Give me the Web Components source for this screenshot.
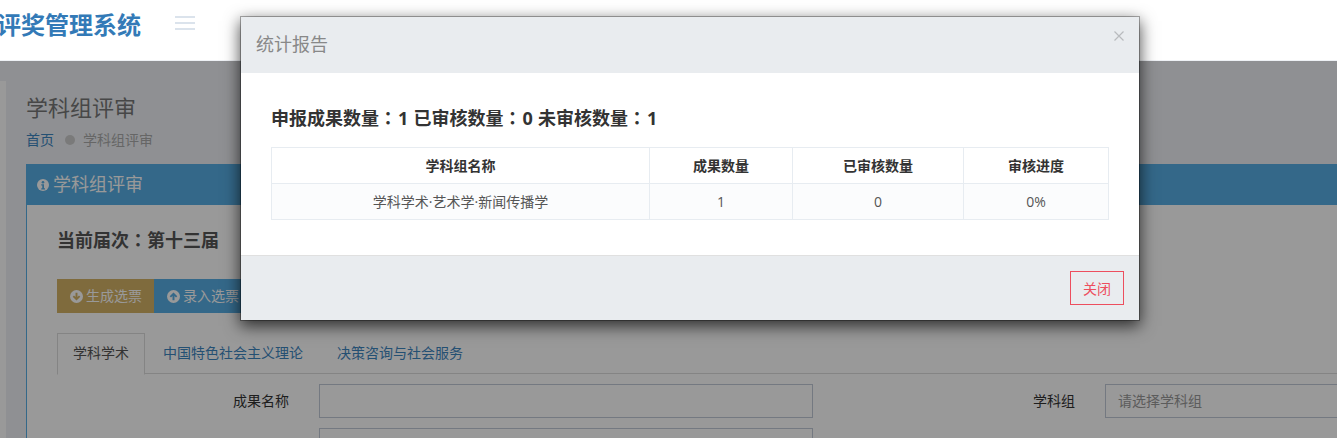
<!DOCTYPE html>
<html lang="zh-CN">
<head>
<meta charset="utf-8">
<title>学科组评审</title>
<style>
  html, body { margin: 0; height: 100%; overflow: hidden; }
  body {
    position: relative;
    font-family: "Open Sans", "Noto Sans CJK SC", sans-serif;
    font-size: 14px;
    color: #333;
    background: #eef1f5;
  }
</style>
</head>
<body>
<app-header>评奖管理系统</app-header>

<page-shell>
  <span slot="title">学科组评审</span>
  <span slot="crumb">学科组评审</span>
  <review-panel></review-panel>
</page-shell>

<report-modal></report-modal>

<script>
// Iconos de Font Awesome dibujados a mano, el color interior es el del fondo
function circleIcon(inner, bg) {
  return `<svg width="13" height="13" viewBox="0 0 24 24" aria-hidden="true">
    <circle cx="12" cy="12" r="12" fill="#fff"/>${inner.replace(/BG/g, bg)}</svg>`;
}
const ICON_INFO = '<circle cx="12" cy="6.5" r="2.6" fill="BG"/><path d="M8.5 10.5h5.5v8h2v2.5H8.5v-2.5h2v-5.5h-2z" fill="BG"/>';
const ICON_DOWN = '<path d="M12 19.5l-7-7 2.4-2.4 2.8 2.8V5h3.6v7.9l2.8-2.8 2.4 2.4z" fill="BG"/>';
const ICON_UP = '<path d="M12 4.5l7 7-2.4 2.4-2.8-2.8V19h-3.6v-7.9l-2.8 2.8L5 11.500z" fill="BG"/>';

// Barra superior, queda por encima del fondo oscuro del modal
class AppHeader extends HTMLElement {
  constructor() {
    super();
    this.attachShadow({ mode: 'open' });
  }
  connectedCallback() {
    this.shadowRoot.innerHTML = `
      <style>
        :host {
          display: flex;
          position: relative;
          z-index: 2;
          height: 60px;
          background: #fff;
          border-bottom: 1px solid #eef1f5;
        }
        .brand {
          width: 141px;
          display: flex;
          justify-content: flex-end;
          overflow: hidden;
          padding-top: 11px;
          font-size: 24px;
          font-weight: 700;
          line-height: 26px;
          white-space: nowrap;
          color: #337ab7;
          font-family: "Noto Sans CJK SC", sans-serif;
        }
        .toggler {
          display: flex;
          flex-direction: column;
          gap: 4px;
          width: 20px;
          margin: 16px 0 0 34px;
        }
        .toggler i { display: block; height: 2px; background: #dbe3ec; }
      </style>
      <div class="brand"><span><slot></slot></span></div>
      <div class="toggler"><i></i><i></i><i></i></div>
    `;
  }
}
customElements.define('app-header', AppHeader);

// Contenido de la página con la franja del menú lateral y el fondo oscuro
class PageShell extends HTMLElement {
  constructor() {
    super();
    this.attachShadow({ mode: 'open' });
  }
  connectedCallback() {
    this.shadowRoot.innerHTML = `
      <style>
        :host {
          display: flex;
          position: relative;
          height: 377px;
          overflow: hidden;
        }
        .side { flex: 0 0 6px; margin-top: 20px; background: #fff; }
        .content { flex: 0 0 1500px; padding: 30px 0 0 20px; }
        h1 {
          margin: 0;
          height: 30px;
          font-size: 22px;
          font-weight: 400;
          line-height: 30px;
          color: #777;
          font-family: "Noto Sans CJK SC", sans-serif;
        }
        .crumbs {
          display: flex;
          align-items: center;
          height: 20px;
          margin: 9px 0 14px;
          line-height: 20px;
          font-size: 14px;
          color: #aaa;
        }
        .crumbs a { color: #3d85c0; text-decoration: none; }
        .crumbs i {
          width: 10px;
          height: 10px;
          margin: 0 8px 0 11px;
          border-radius: 50%;
          background: #ccc;
        }
        .backdrop {
          position: absolute;
          inset: 0;
          background: rgba(0, 0, 0, .4);
        }
      </style>
      <div class="side"></div>
      <div class="content">
        <h1><slot name="title"></slot></h1>
        <div class="crumbs"><a href="#">首页</a><i></i><slot name="crumb"></slot></div>
        <slot></slot>
      </div>
      <div class="backdrop"></div>
    `;
  }
}
customElements.define('page-shell', PageShell);

class ReviewPanel extends HTMLElement {
  constructor() {
    super();
    this.attachShadow({ mode: 'open' });
  }
  connectedCallback() {
    this.shadowRoot.innerHTML = `
      <style>
        :host {
          display: block;
          background: #fff;
          border-left: 1px solid #57aee4;
          height: 400px;
        }
        .head {
          display: flex;
          align-items: center;
          gap: 4px;
          height: 41px;
          padding-left: 10px;
          margin-left: -1px;
          background: #57aee4;
          color: #fff;
          font-size: 18px;
        }
        .head svg { width: 12px; height: 12px; margin-left: 1px; }
        .head span { margin-top: -3px; }
        .body { padding: 22px 0 0 30px; }
        h2 {
          height: 24px;
          margin: 0 0 28px;
          font-size: 18px;
          line-height: 24px;
          font-weight: 700;
          color: #555;
          font-family: "Noto Sans CJK SC", sans-serif;
        }
        h2 span { font-family: "Noto Sans CJK TC", sans-serif; text-spacing-trim: space-all; }
        .actions { display: flex; }
        .btn {
          display: flex;
          align-items: center;
          gap: 3px;
          height: 34px;
          padding: 0 12px 0 13px;
          color: #fff;
        }
        .btn span { margin-top: -2px; }
        .gold { background: #d4b267; }
        .blue { background: #57aee4; }
        .tabs {
          display: flex;
          gap: 2px;
          margin: 20px 0 10px;
          height: 40px;
          border-bottom: 1px solid #ddd;
        }
        .tab {
          height: 40px;
          padding: 0 16px;
          line-height: 40px;
          color: #3d85c0;
        }
        .tab.on {
          position: relative;
          height: 40px;
          padding: 0 15px;
          background: #fff;
          color: #555;
          border: 1px solid #ddd;
          border-bottom: 1px solid #fff;
          line-height: 38px;
        }
        .form {
          display: grid;
          grid-template-columns: 262px 494px 292px 400px;
          row-gap: 10px;
          align-items: center;
        }
        label { height: 34px; padding-right: 30px; text-align: right; line-height: 34px; color: #333; }
        .input {
          height: 32px;
          padding: 0 12px;
          line-height: 32px;
          border: 1px solid #c2cad8;
          color: #999;
        }
      </style>
      <div class="head">${circleIcon(ICON_INFO, '#57aee4')}<span>学科组评审</span></div>
      <div class="body">
        <h2>当前届次<span lang="zh-TW">：</span>第十三届</h2>
        <div class="actions">
          <div class="btn gold">${circleIcon(ICON_DOWN, '#d4b267')}<span>生成选票</span></div>
          <div class="btn blue">${circleIcon(ICON_UP, '#57aee4')}<span>录入选票</span></div>
        </div>
        <div class="tabs">
          <div class="tab on">学科学术</div>
          <div class="tab">中国特色社会主义理论</div>
          <div class="tab">决策咨询与社会服务</div>
        </div>
        <div class="form">
          <label>成果名称</label>
          <div class="input"></div>
          <label>学科组</label>
          <div class="input">请选择学科组</div>
          <label></label>
          <div class="input"></div>
        </div>
      </div>
    `;
  }
}
customElements.define('review-panel', ReviewPanel);

class StatsTable extends HTMLElement {
  constructor() {
    super();
    this.attachShadow({ mode: 'open' });
  }
  connectedCallback() {
    const heads = ['学科组名称', '成果数量', '已审核数量', '审核进度'];
    const row = ['学科学术·艺术学·新闻传播学', '1', '0', '0%'];
    this.shadowRoot.innerHTML = `
      <style>
        :host { display: block; }
        table {
          width: 837px;
          table-layout: fixed;
          border-collapse: collapse;
          font-size: 14px;
          color: #333;
        }
        th, td {
          height: 36px;
          padding: 0 8px;
          box-sizing: border-box;
          border: 1px solid #e7ecf1;
          text-align: center;
          line-height: 20px;
        }
        th { font-weight: 700; }
        td { color: #555; }
        tbody tr { background: #fbfcfd; }
      </style>
      <table>
        <colgroup><col style="width:378px"><col style="width:143px"><col style="width:171px"><col style="width:145px"></colgroup>
        <thead><tr>${heads.map(h => `<th>${h}</th>`).join('')}</tr></thead>
        <tbody><tr>${row.map(c => `<td>${c}</td>`).join('')}</tr></tbody>
      </table>
    `;
  }
}
customElements.define('stats-table', StatsTable);

class ReportModal extends HTMLElement {
  constructor() {
    super();
    this.attachShadow({ mode: 'open' });
  }
  connectedCallback() {
    const colon = '<span class="c" lang="zh-TW">：</span>';
    this.shadowRoot.innerHTML = `
      <style>
        :host {
          display: block;
          position: absolute;
          z-index: 3;
          left: 240px;
          top: 16px;
          width: 898px;
          background: #fff;
          border: 1px solid rgba(0, 0, 0, .3);
          background-clip: padding-box;
          box-shadow: 0 5px 15px rgba(0, 0, 0, .7);
        }
        .head {
          display: flex;
          justify-content: space-between;
          align-items: center;
          height: 56px;
          padding: 0 15px;
          background: #e9ecef;
        }
        .head h3 { margin: -4px 0 0; font-size: 18px; font-weight: 400; color: #888; }
        .head svg { margin-top: -18px; }
        .body { padding: 32px 30px 35px; }
        .summary {
          height: 24px;
          margin: 0 0 18px;
          font-size: 18px;
          line-height: 24px;
          font-weight: 700;
          color: #333;
          word-spacing: .5px;
        }
        .c { font-family: "Noto Sans CJK TC", sans-serif; text-spacing-trim: space-all; padding-right: 1px; }
        .foot {
          display: flex;
          justify-content: flex-end;
          padding: 15px;
          background: #e9ecef;
          border-top: 1px solid #e0e0e0;
        }
        button {
          width: 54px;
          height: 34px;
          padding: 0;
          background: transparent;
          border: 1px solid #ed4e5e;
          color: #ed4e5e;
          font: inherit;
        }
      </style>
      <div class="head">
        <h3>统计报告</h3>
        <svg width="10" height="10" viewBox="0 0 10 10" aria-hidden="true"><path d="M.5.5l9 9M9.500.5l-9 9" stroke="#b8bbbe" stroke-width="1.200" fill="none"/></svg>
      </div>
      <div class="body">
        <p class="summary">申报成果数量${colon}1 已审核数量${colon}0 未审核数量${colon}1</p>
        <stats-table></stats-table>
      </div>
      <div class="foot"><button type="button">关闭</button></div>
    `;
  }
}
customElements.define('report-modal', ReportModal);
</script>
</body>
</html>
